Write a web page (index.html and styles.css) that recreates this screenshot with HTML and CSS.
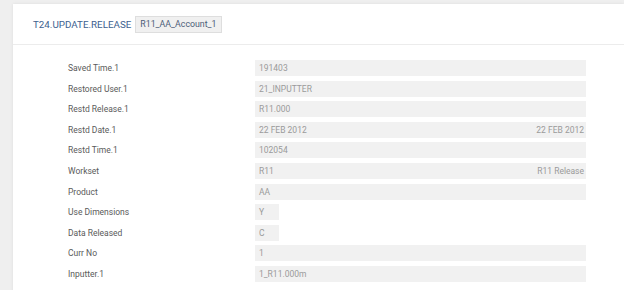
FILE: index.html
```html
<!DOCTYPE html>
<html lang="en">
<head>
  <meta charset="UTF-8">
  <title>T24.UPDATE.RELEASE</title>
  <link rel="stylesheet" href="styles.css">
</head>
<body>
  <div class="card">
    <div class="card-header">
      <span class="title">T24.UPDATE.RELEASE</span>
      <span class="record-id">R11_AA_Account_1</span>
    </div>

    <div class="card-body">
      <div class="row">
        <span class="label">Saved Time.1</span>
        <span class="field">191403</span>
      </div>
      <div class="row">
        <span class="label">Restored User.1</span>
        <span class="field">21_INPUTTER</span>
      </div>
      <div class="row">
        <span class="label">Restd Release.1</span>
        <span class="field">R11.000</span>
      </div>
      <div class="row">
        <span class="label">Restd Date.1</span>
        <span class="field">22 FEB 2012<span class="enrich">22 FEB 2012</span></span>
      </div>
      <div class="row">
        <span class="label">Restd Time.1</span>
        <span class="field">102054</span>
      </div>
      <div class="row">
        <span class="label">Workset</span>
        <span class="field">R11<span class="enrich">R11 Release</span></span>
      </div>
      <div class="row">
        <span class="label">Product</span>
        <span class="field">AA</span>
      </div>
      <div class="row">
        <span class="label">Use Dimensions</span>
        <span class="field short">Y</span>
      </div>
      <div class="row">
        <span class="label">Data Released</span>
        <span class="field short">C</span>
      </div>
      <div class="row">
        <span class="label">Curr No</span>
        <span class="field">1</span>
      </div>
      <div class="row">
        <span class="label">Inputter.1</span>
        <span class="field">1_R11.000m</span>
      </div>
    </div>
  </div>
</body>
</html>
```

FILE: styles.css
```css
body {
  margin: 0;
  padding: 4px 0 0 13px;
  background-color: #efefef;
  font-family: Roboto, 'Liberation Sans', sans-serif;
  overflow: hidden;
}

.card {
  background-color: #fff;
  min-height: 300px;
  box-shadow: 0 0 3px rgba(0, 0, 0, 0.08);
}

.card-header {
  height: 40px;
  display: flex;
  align-items: center;
  padding-left: 20px;
  border-bottom: 1px solid #ececec;
}

.title {
  color: #3d5f8f;
  font-size: 9.8px;
  margin-right: 4px;
}

.record-id {
  background-color: #f0f0f0;
  border: 1px solid #dedede;
  color: #4d5d78;
  font-size: 8.8px;
  padding: 3px 4px;
  line-height: 9px;
}

.card-body {
  padding: 15px 0 0 55px;
}

.row {
  display: flex;
  align-items: center;
  height: 16px;
  margin-bottom: 4.6px;
}

.label {
  width: 187px;
  color: #5a5a5a;
  font-size: 8.5px;
}

.field {
  width: 331px;
  height: 16px;
  box-sizing: border-box;
  display: flex;
  justify-content: space-between;
  align-items: center;
  padding: 0 2px 0 4px;
  background-color: #f1f1f1;
  color: #9a9a9a;
  font-size: 8.5px;
}

.field.short {
  width: 24px;
}
```
